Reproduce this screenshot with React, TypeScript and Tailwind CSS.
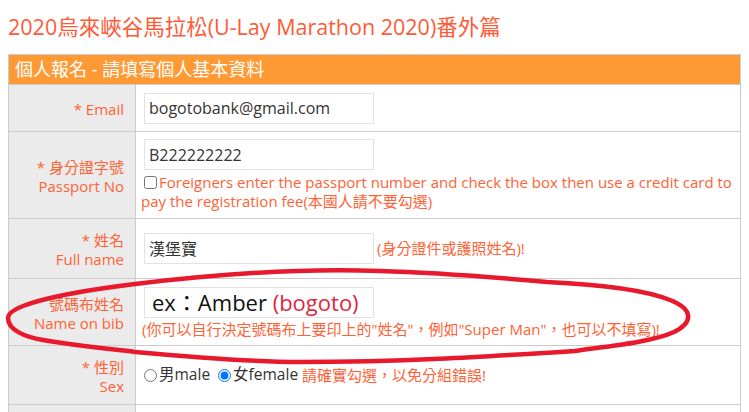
import type { ReactNode } from 'react';

const label = 'text-[#ff6235]';

function Row({ h, left, children }: { h: string; left: ReactNode; children: ReactNode }) {
  return (
    <div className={`flex border-b border-[#cccccc] ${h}`}>
      <div className="flex w-[127px] shrink-0 flex-col items-end justify-center border-r border-[#cccccc] bg-[#ebebeb] pr-[11px] pt-[3px] text-right leading-[19px]">
        {left}
      </div>
      <div className="flex min-w-0 flex-1 flex-col justify-center pl-2 pr-[3px]">{children}</div>
    </div>
  );
}

function TextBox({ value }: { value: string }) {
  return (
    <div className="flex h-[31px] w-[230px] items-center border border-[#e2e2e2] bg-white px-[4px] text-[16px] text-[#333]">
      {value}
    </div>
  );
}

export default function App() {
  return (
    <div className="relative h-[412px] overflow-hidden bg-white p-2 font-['Open_Sans','Noto_Sans_CJK_TC',sans-serif] text-[15px]">
      <h1 className="mb-[10px] mt-[2px] text-[21.5px] leading-[34px] text-[#ff5a36]">
        2020烏來峽谷馬拉松(U-Lay Marathon 2020)番外篇
      </h1>

      <div className="border border-[#cccccc]">
        <div className="flex h-[30px] items-center border-b border-[#cccccc] bg-[#ff9933] pl-[6px] text-[18px] text-white">
          個人報名 - 請填寫個人基本資料
        </div>

        <Row h="h-[47px]" left={<span className={label}>* Email</span>}>
          <TextBox value="bogotobank@gmail.com" />
        </Row>

        <Row
          h="h-[87px]"
          left={
            <>
              <span className={label}>* 身分證字號</span>
              <span className={label}>Passport No</span>
            </>
          }
        >
          <TextBox value="B222222222" />
          <p className="-ml-[3px] mt-[3px] leading-[19px] text-[#ff6235]">
            <input type="checkbox" className="ml-[3px] mr-[2px] h-[13px] w-[13px] align-[-1px]" />
            Foreigners enter the passport number and check the box then use a credit card to pay the registration
            fee(本國人請不要勾選)
          </p>
        </Row>

        <Row
          h="h-[60px]"
          left={
            <>
              <span className={label}>* 姓名</span>
              <span className={label}>Full name</span>
            </>
          }
        >
          <div className="flex items-center gap-[3px]">
            <TextBox value="漢堡寶" />
            <span className="text-[#ff6235]">(身分證件或護照姓名)!</span>
          </div>
        </Row>

        <Row
          h="h-[67px]"
          left={
            <>
              <span className={label}>號碼布姓名</span>
              <span className={label}>Name on bib</span>
            </>
          }
        >
          <div className="mt-[3px] flex h-[31px] w-[230px] items-center border border-[#e2e2e2] bg-white px-[7px] text-[22px] text-[#111]">
            ex：Amber&nbsp;<span className="text-[#dc2840]">(bogoto)</span>
          </div>
          <p className="-ml-[2px] leading-[22px] text-[#ff6235]">
            (你可以自行決定號碼布上要印上的"姓名"，例如"Super Man"，也可以不填寫)!
          </p>
        </Row>

        <Row
          h="h-[59px]"
          left={
            <>
              <span className={label}>* 性別</span>
              <span className={label}>Sex</span>
            </>
          }
        >
          <div className="flex items-center text-[15.5px] text-[#333]">
            <input type="radio" name="sex" className="mr-[2px] h-[13px] w-[13px]" />
            <span>男male</span>
            <input type="radio" name="sex" defaultChecked className="ml-[8px] mr-[2px] h-[13px] w-[13px]" />
            <span>女female</span>
            <span className="ml-[4px] text-[15px] text-[#ff6235]">請確實勾選，以免分組錯誤!</span>
          </div>
        </Row>

        <Row h="h-[40px]" left={<span />}>
          <span />
        </Row>
      </div>

      <svg className="pointer-events-none absolute left-0 top-0" width="749" height="412" viewBox="0 0 749 412">
        <path
          d="M 575 351 C 610 346, 652 342, 674 332 C 694 322, 693 309, 670 300 C 640 288, 590 284, 547 282 C 480 276, 420 272, 380 271 C 330 269, 250 270, 135 284 C 70 292, 8 304, 8 318 C 8 330, 25 337, 43 340 C 80 346, 110 349, 135 352 C 200 358, 250 362, 300 362 C 400 362, 480 357, 575 351"
          fill="none"
          stroke="#e8192c"
          strokeWidth="4.5"
          strokeLinecap="round"
        />
      </svg>
    </div>
  );
}
